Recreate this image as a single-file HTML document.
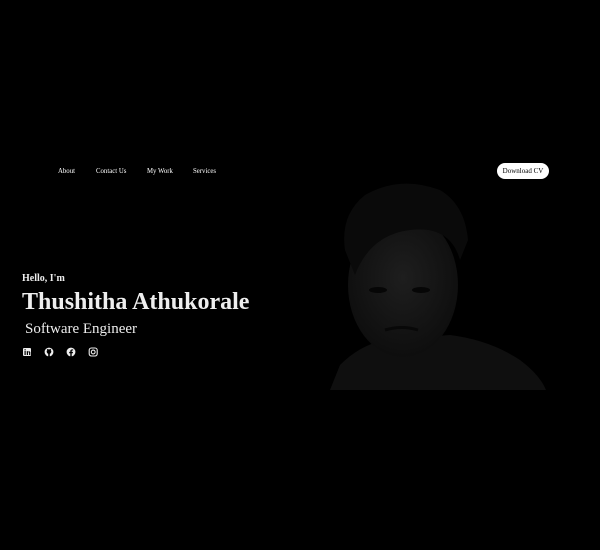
<!DOCTYPE html>
<html><head><style>
body{margin:0;background:#000;width:600px;height:550px;overflow:hidden;position:relative;font-family:"Liberation Serif",serif;color:#fff}
.a{position:absolute;white-space:nowrap}
.nav{font-size:6.8px;top:168px}
</style></head><body>
<svg class="a" style="left:0;top:0" width="600" height="550">
<defs><radialGradient id="f" cx="50%" cy="45%" r="55%"><stop offset="0" stop-color="#1e1e1e"/><stop offset="1" stop-color="#0e0e0e"/></radialGradient></defs>
<path d="M330 390 L340 365 Q360 345 385 340 L450 335 Q490 340 520 360 Q540 375 546 390 Z" fill="#0f0f0f"/>
<ellipse cx="403" cy="285" rx="55" ry="72" fill="url(#f)"/>
<path d="M345 250 Q340 215 365 195 Q400 175 440 190 Q465 205 468 240 L460 260 Q450 225 410 230 Q370 235 355 275 Z" fill="#0a0a0a"/>
<ellipse cx="378" cy="290" rx="9" ry="3" fill="#060606"/><ellipse cx="421" cy="290" rx="9" ry="3" fill="#060606"/>
<path d="M385 330 Q402 325 418 330" stroke="#080808" stroke-width="3" fill="none"/>
</svg>
<div class="a nav" style="left:58px">About</div>
<div class="a nav" style="left:96px">Contact Us</div>
<div class="a nav" style="left:147px">My Work</div>
<div class="a nav" style="left:193px">Services</div>
<div class="a" style="left:497px;top:163px;width:52px;height:16px;background:#fff;border-radius:8px;color:#000;font-size:7px;line-height:16px;text-align:center">Download CV</div>
<div class="a" style="left:22px;top:273px;font-size:10px;font-weight:bold;color:#eee">Hello, I'm</div>
<div class="a" style="left:22px;top:289px;font-size:24px;font-weight:bold;color:#eee">Thushitha Athukorale</div>
<div class="a" style="left:25px;top:321px;font-size:15px;color:#eee">Software Engineer</div>
<svg class="a" style="left:22px;top:347px" width="80" height="11" fill="#eee">
<rect x="1" y="1" width="8" height="8" rx="1"/><rect x="2.5" y="4" width="1.2" height="4" fill="#000"/><rect x="2.5" y="2.2" width="1.2" height="1.2" fill="#000"/><path d="M4.8 4h1v1 q1.5-1.5 2.5 0v3h-1.2v-2.5q-.8-.8-1.1 0v2.5h-1.2z" fill="#000"/>
<circle cx="27" cy="5" r="4.4"/><circle cx="27" cy="4.6" r="2.3" fill="#000"/><rect x="26.2" y="6" width="1.6" height="3.5" fill="#000"/><path d="M24.9 3.2 l.2-1.4 1.2.8z M29.1 3.2 l-.2-1.4 -1.2.8z" fill="#000"/>
<circle cx="49" cy="5" r="4.4"/><path d="M49.7 9.5v-3.3h1.1l.2-1.3h-1.3v-.8q0-.6.6-.6h.8v-1.1q-2.5-.4-2.8 1.4v1.1h-1.1v1.3h1.1v3.3z" fill="#000"/>
<rect x="67.2" y="1" width="8" height="8" rx="2.2" fill="none" stroke="#eee" stroke-width="1.1"/><circle cx="71.2" cy="5" r="1.9" fill="none" stroke="#eee" stroke-width="1.1"/>
</svg>
</body></html>
